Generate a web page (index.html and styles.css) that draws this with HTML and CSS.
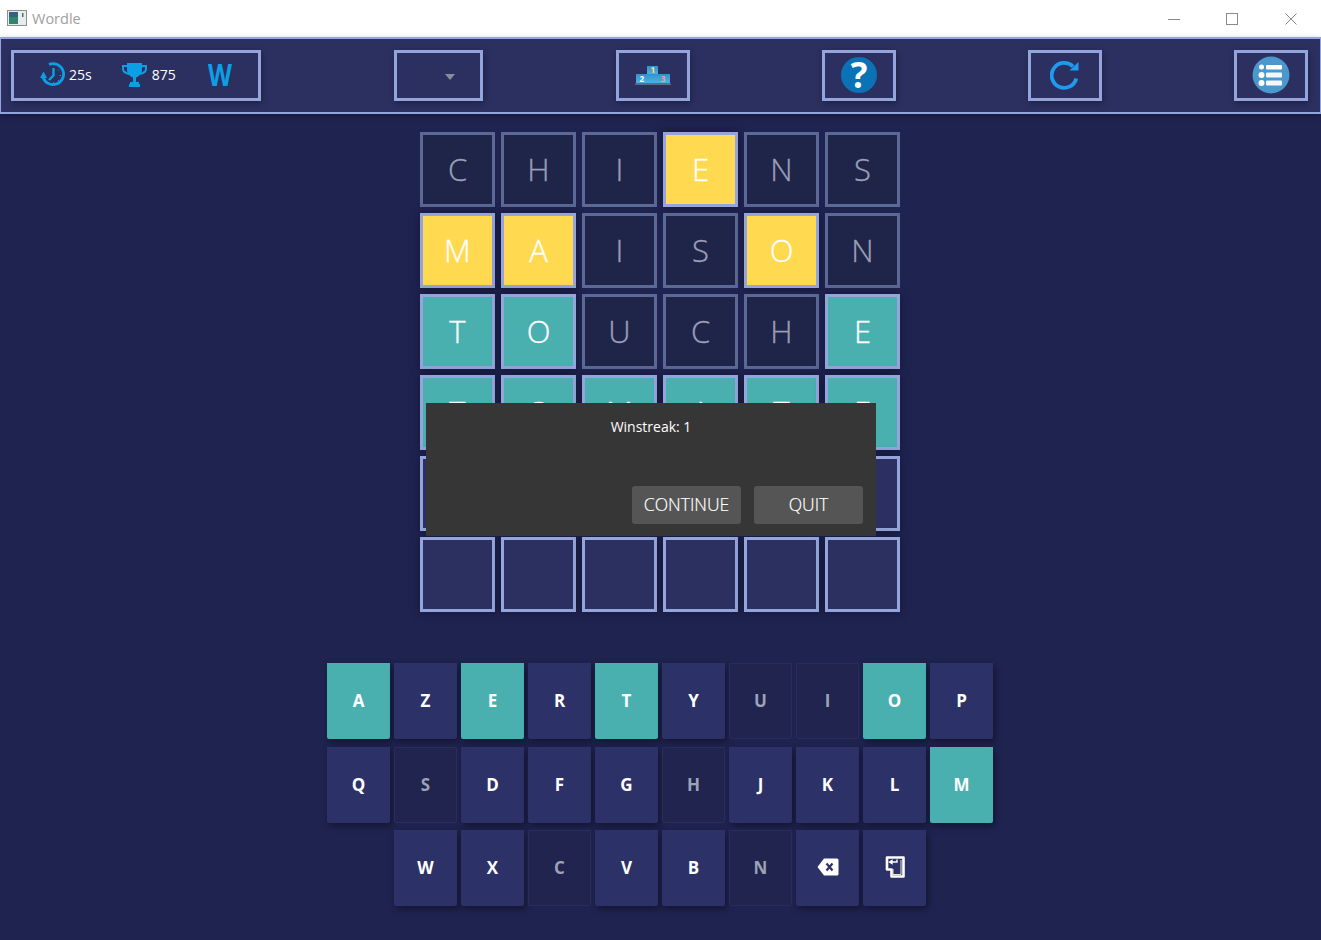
FILE: index.html
```html
<!DOCTYPE html>
<html lang="en">
<head>
    <meta charset="UTF-8">
    <meta name="viewport" content="width=device-width, initial-scale=1.0">
    <title>Wordle</title>
    <link rel="stylesheet" href="styles.css">
</head>
<body>
    <header class="titlebar">
        <div class="title">
            <svg class="app-icon" width="20" height="16" viewBox="0 0 20 16">
                <rect x="0.5" y="0.5" width="19" height="15" fill="#e8ecec" stroke="#8b8f90"/>
                <rect x="2" y="2" width="9" height="12" fill="#2f8570"/>
                <rect x="2" y="2" width="9" height="5" fill="#35607e"/>
                <rect x="15" y="3" width="1.5" height="4" fill="#3a7a68"/>
            </svg>
            <span class="title-text">Wordle</span>
        </div>
        <div class="window-controls">
            <div class="window-control">
                <svg width="12" height="12" viewBox="0 0 12 12"><path d="M0 6.5H12" stroke="#8a8a8a"/></svg>
            </div>
            <div class="window-control">
                <svg width="12" height="12" viewBox="0 0 12 12"><rect x="0.5" y="0.5" width="11" height="11" fill="none" stroke="#8a8a8a"/></svg>
            </div>
            <div class="window-control">
                <svg width="12" height="12" viewBox="0 0 12 12"><path d="M0.5 0.5L11.5 11.5M11.5 0.5L0.5 11.5" stroke="#8a8a8a"/></svg>
            </div>
        </div>
    </header>

    <nav class="toolbar">
        <div class="tool stats">
            <div class="stat stat-time">
                <svg width="26" height="26" viewBox="0 0 26 26">
                    <path d="M9 2.400A10.500 10.500 0 1 1 3 15" fill="none" stroke="#0d9fe6" stroke-width="2.800"/>
                    <path d="M0 16H7L3.500 9.500Z" fill="#0d9fe6"/>
                    <path d="M13.500 6V13.500L9 18" fill="none" stroke="#0d9fe6" stroke-width="2.400"/>
                    <path d="M19 7.500L18 8.500M21 13.500H19.600M19 19L18 18M13.500 21V20" stroke="#0d9fe6"/>
                </svg>
                <span>25s</span>
            </div>
            <div class="stat stat-score">
                <svg width="25" height="26" viewBox="0 0 25 26">
                    <path d="M5 1H20V8C20 12 16 15 14 15.500V20H17V22H18V25H7V22H8V20H11V15.500C9 15 5 12 5 8Z" fill="#0d9fe6"/>
                    <path d="M6 4H1V7C1 9.500 3 11 7 12M19 4H24V7C24 9.500 22 11 18 12" fill="none" stroke="#0d9fe6" stroke-width="2"/>
                </svg>
                <span>875</span>
            </div>
            <div class="stat-word">W</div>
        </div>

        <div class="tool dropdown">
            <span class="caret"></span>
        </div>

        <div class="tool icon-tool podium">
            <svg width="36" height="22" viewBox="0 0 36 22">
                <defs>
                    <linearGradient id="podium" x1="0" y1="0" x2="0" y2="1">
                        <stop offset="0" stop-color="#2f93cd"/>
                        <stop offset="1" stop-color="#52b3e2"/>
                    </linearGradient>
                </defs>
                <rect x="12" y="2" width="11" height="9" fill="url(#podium)"/>
                <rect x="1" y="10" width="34" height="9.500" fill="url(#podium)"/>
                <rect x="0" y="19.500" width="36" height="1.500" fill="#5f6a88"/>
                <text x="17.700" y="8.500" class="podium-num" fill="#f0e88a">1</text>
                <text x="6.700" y="18" class="podium-num" fill="#ffffff">2</text>
                <text x="28" y="18" class="podium-num" fill="#f0a08a">3</text>
            </svg>
        </div>

        <div class="tool icon-tool">
            <div class="round-icon help">?</div>
        </div>

        <div class="tool icon-tool">
            <svg width="30" height="30" viewBox="0 0 30 30">
                <path d="M23 6.500A12.500 12.500 0 1 0 26.300 18.500" fill="none" stroke="#1e9bf0" stroke-width="3.800"/>
                <path d="M19.500 10.500H28.500V2Z" fill="#1e9bf0"/>
            </svg>
        </div>

        <div class="tool icon-tool">
            <svg width="38" height="38" viewBox="0 0 38 38">
                <circle cx="19" cy="19" r="18.500" fill="#4a98cc"/>
                <circle cx="9.500" cy="11" r="2.500" fill="#fff"/>
                <circle cx="9.500" cy="19" r="3" fill="#fff"/>
                <circle cx="9.500" cy="27" r="3" fill="#fff"/>
                <rect x="14" y="9" width="16" height="4.500" rx="1" fill="#fff"/>
                <rect x="14" y="16.500" width="16" height="5" rx="1" fill="#f4f6f8"/>
                <rect x="14" y="24.500" width="16" height="5" rx="1" fill="#f4f6f8"/>
            </svg>
        </div>
    </nav>

    <main class="game">
        <section class="board">
            <div class="tile miss">C</div>
            <div class="tile miss">H</div>
            <div class="tile miss">I</div>
            <div class="tile near">E</div>
            <div class="tile miss">N</div>
            <div class="tile miss">S</div>

            <div class="tile near">M</div>
            <div class="tile near">A</div>
            <div class="tile miss">I</div>
            <div class="tile miss">S</div>
            <div class="tile near">O</div>
            <div class="tile miss">N</div>

            <div class="tile good">T</div>
            <div class="tile good">O</div>
            <div class="tile miss">U</div>
            <div class="tile miss">C</div>
            <div class="tile miss">H</div>
            <div class="tile good">E</div>

            <div class="tile good">T</div>
            <div class="tile good">O</div>
            <div class="tile good">M</div>
            <div class="tile good">A</div>
            <div class="tile good">T</div>
            <div class="tile good">E</div>

            <div class="tile"></div>
            <div class="tile"></div>
            <div class="tile"></div>
            <div class="tile"></div>
            <div class="tile"></div>
            <div class="tile"></div>

            <div class="tile"></div>
            <div class="tile"></div>
            <div class="tile"></div>
            <div class="tile"></div>
            <div class="tile"></div>
            <div class="tile"></div>
        </section>

        <section class="keyboard">
            <div class="key-row">
                <div class="key good">A</div>
                <div class="key">Z</div>
                <div class="key good">E</div>
                <div class="key">R</div>
                <div class="key good">T</div>
                <div class="key">Y</div>
                <div class="key used">U</div>
                <div class="key used">I</div>
                <div class="key good">O</div>
                <div class="key">P</div>
            </div>
            <div class="key-row">
                <div class="key">Q</div>
                <div class="key used">S</div>
                <div class="key">D</div>
                <div class="key">F</div>
                <div class="key">G</div>
                <div class="key used">H</div>
                <div class="key">J</div>
                <div class="key">K</div>
                <div class="key">L</div>
                <div class="key good">M</div>
            </div>
            <div class="key-row last-row">
                <div class="key">W</div>
                <div class="key">X</div>
                <div class="key used">C</div>
                <div class="key">V</div>
                <div class="key">B</div>
                <div class="key used">N</div>
                <div class="key">
                    <svg width="22" height="18" viewBox="0 0 22 18">
                        <path d="M7 0.500H20A1.500 1.500 0 0 1 21.500 2V16A1.500 1.500 0 0 1 20 17.500H7L0.500 9Z" fill="#fff"/>
                        <path d="M9.500 5.500L15.500 12.500M15.500 5.500L9.500 12.500" stroke="#2c3268" stroke-width="2.200"/>
                    </svg>
                </div>
                <div class="key">
                    <svg width="20" height="22" viewBox="0 0 20 22">
                        <path d="M2 1.500H18.500V20.500H6.500V13.500H2Z" fill="#2c3268" stroke="#fff" stroke-width="2.600" stroke-linejoin="round"/>
                        <path d="M8 13V18.500H16V4" fill="none" stroke="#e8e8c8"/>
                        <path d="M4.500 6H12V3.500M4.500 6L7 4.500V7.500Z" fill="none" stroke="#fff" stroke-width="1.400"/>
                    </svg>
                </div>
            </div>
        </section>

        <div class="dialog">
            <p class="dialog-text">Winstreak: 1</p>
            <div class="dialog-actions">
                <button class="dialog-btn">CONTINUE</button>
                <button class="dialog-btn">QUIT</button>
            </div>
        </div>
    </main>
</body>
</html>
```

FILE: styles.css
```css
* {
    box-sizing: border-box;
}

html, body {
    height: 100%;
}

body {
    margin: 0;
    overflow: hidden;
    font-family: "Open Sans", "Noto Sans", sans-serif;
    background-color: #1f2350;
    color: #fff;
}

/* window title bar */
.titlebar {
    display: flex;
    justify-content: space-between;
    align-items: center;
    height: 37px;
    background-color: #fff;
}

.title {
    display: flex;
    align-items: center;
    gap: 5px;
    padding-left: 7px;
    padding-bottom: 1px;
    color: #a0a0a0;
    font-size: 14.5px;
}

.window-controls {
    display: flex;
    padding-right: 1px;
}

.window-control {
    display: flex;
    align-items: center;
    justify-content: center;
    width: 58.5px;
    height: 37px;
}

/* top toolbar */
.toolbar {
    display: flex;
    align-items: center;
    gap: 132px;
    height: 77px;
    padding: 0 12px 0 10px;
    background-color: #2c3060;
    border: 2px solid #93a5dc;
    border-left-width: 1px;
    border-right-width: 1px;
    box-shadow: 0 2px 6px rgba(0, 0, 0, 0.3);
}

.tool {
    display: flex;
    align-items: center;
    height: 51px;
    padding-bottom: 2px;
    border: 3px solid #93a5dc;
    box-shadow: 1px 2px 6px rgba(0, 0, 0, 0.35);
}

.stats {
    width: 250px;
    padding-left: 26px;
    font-size: 14px;
}

.stat {
    display: flex;
    align-items: center;
    gap: 3px;
}

.stat-time {
    margin-right: 30px;
}

.stat-score {
    gap: 5px;
    margin-right: 32px;
}

.stat-word {
    color: #0d9fe6;
    font-size: 31px;
    font-weight: 700;
    line-height: 1;
    transform: scaleX(0.8);
    transform-origin: left center;
}

.dropdown {
    justify-content: flex-end;
    width: 89px;
    margin-left: 1px;
    padding: 0 25px 0 0;
}

.caret {
    width: 0;
    height: 0;
    margin-top: 2px;
    border-left: 5px solid transparent;
    border-right: 5px solid transparent;
    border-top: 6px solid #8b8b99;
}

.icon-tool {
    justify-content: center;
    width: 74px;
}

.podium {
    margin-left: 1px;
}

.podium-num {
    font-size: 8px;
    font-weight: 700;
    text-anchor: middle;
}

.round-icon {
    display: flex;
    align-items: center;
    justify-content: center;
    width: 36px;
    height: 36px;
    border-radius: 50%;
}

.help {
    background-color: #0a72b5;
    color: #fff;
    font-size: 35px;
    font-weight: 700;
    line-height: 1;
}

/* board */
.game {
    position: relative;
    display: flex;
    flex-direction: column;
    align-items: center;
    padding: 18px 1px 0 0;
}

.board {
    display: grid;
    grid-template-columns: repeat(6, 75px);
    grid-auto-rows: 75px;
    gap: 6px;
}

.tile {
    display: flex;
    align-items: center;
    justify-content: center;
    padding-bottom: 1px;
    background-color: #2c3060;
    border: 3px solid #93a5dc;
    box-shadow: 0 0 10px rgba(0, 0, 0, 0.35);
    font-size: 31px;
    font-weight: 300;
    -webkit-text-stroke: 0.35px currentColor;
}

.tile.miss {
    background-color: #1f2449;
    border-color: #5c6896;
    color: #9a9fb5;
    box-shadow: none;
}

.tile.near {
    background-color: #ffd94f;
}

.tile.good {
    background-color: #4aafaf;
}

/* keyboard */
.keyboard {
    display: flex;
    flex-direction: column;
    gap: 8px;
    width: 666px;
    margin-top: 51px;
}

.key-row {
    display: flex;
    gap: 4px;
}

.last-row {
    margin-top: -1px;
    padding-left: 67px;
}

.key {
    display: flex;
    align-items: center;
    justify-content: center;
    width: 63px;
    height: 76px;
    padding-bottom: 2px;
    background-color: #2c3268;
    border-radius: 0 0 2px 2px;
    box-shadow: 2px 3px 7px rgba(0, 0, 0, 0.4);
    font-size: 17px;
    font-weight: 700;
}

.key.good {
    background-color: #4aafaf;
}

.key.used {
    background-color: #20244e;
    border: 1px solid #292d5c;
    color: #9da2b6;
    box-shadow: none;
}

/* win dialog */
.dialog {
    position: absolute;
    top: 289px;
    left: 426px;
    display: flex;
    flex-direction: column;
    justify-content: space-between;
    width: 450px;
    height: 133px;
    padding: 14px 13px 12px;
    background-color: #363636;
}

.dialog-text {
    margin: 0;
    font-size: 14px;
    line-height: 20px;
    text-align: center;
}

.dialog-actions {
    display: flex;
    justify-content: flex-end;
    gap: 13px;
}

.dialog-btn {
    width: 109px;
    height: 38px;
    padding: 0 0 2px;
    background-color: #555;
    border: none;
    border-radius: 3px;
    color: #fff;
    font-family: "Open Sans", "Noto Sans", sans-serif;
    font-size: 17.5px;
    font-weight: 300;
    -webkit-text-stroke: 0.2px currentColor;
}
```
